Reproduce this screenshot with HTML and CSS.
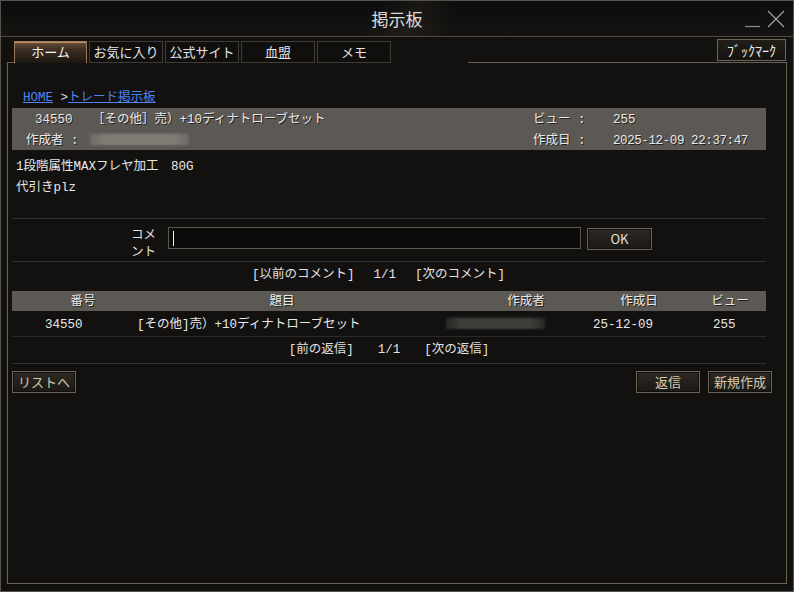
FILE: index.html
```html
<!DOCTYPE html>
<html lang="ja">
<head>
  <meta charset="UTF-8">
  <title>掲示板</title>
  <link rel="stylesheet" href="styles.css">
</head>
<body>

<div class="window">

  <div class="title-bar">
    <div></div>
    <div class="title">掲示板</div>
    <div class="window-controls">
      <svg width="16" height="18" viewBox="0 0 16 18"><line x1="0" y1="16.5" x2="15" y2="16.5" stroke="#8e8e8e" stroke-width="1.2"/></svg>
      <svg width="18" height="18" viewBox="0 0 18 18"><path d="M1 1 L17 17 M17 1 L1 17" stroke="#9c9c9c" stroke-width="1.3" fill="none"/></svg>
    </div>
  </div>

  <div class="tab-bar">
    <div class="tab-edge"></div>
    <div class="tab active">ホーム</div>
    <div class="tab">お気に入り</div>
    <div class="tab">公式サイト</div>
    <div class="tab">血盟</div>
    <div class="tab">メモ</div>
    <div class="tab-gap"></div>
    <div class="tab-rest">
      <button class="bookmark">ﾌﾞｯｸﾏｰｸ</button>
    </div>
  </div>

  <div class="panel">

    <div class="breadcrumb"><a href="#">HOME</a> &gt;<a href="#">トレード掲示板</a></div>

    <div class="post-head">
      <div class="head-row first">
        <span class="post-no">34550</span>
        <span class="post-title">［その他］売）+10ディナトローブセット</span>
        <span class="head-label">ビュー :</span>
        <span>255</span>
      </div>
      <div class="head-row second">
        <span class="author-label">作成者 :</span>
        <span class="author-cell"><span class="blurred"></span></span>
        <span class="head-label">作成日 :</span>
        <span class="num">2025-12-09 22:37:47</span>
      </div>
    </div>

    <div class="post-body">
      <div>1段階属性MAXフレヤ加工　80G</div>
      <div>代引きplz</div>
    </div>

    <div class="comment-row">
      <div class="comment-label">コメント</div>
      <div class="comment-input"><span class="caret"></span></div>
      <button class="btn ok-button">OK</button>
    </div>

    <div class="pager comment-pager">
      <span>[以前のコメント]</span>
      <span>1/1</span>
      <span>[次のコメント]</span>
    </div>

    <div class="list-head">
      <span class="th-no">番号</span>
      <span class="th-title">題目</span>
      <span class="th-author">作成者</span>
      <span class="th-date">作成日</span>
      <span class="th-view">ビュー</span>
    </div>

    <div class="list-row">
      <span class="td-no">34550</span>
      <span class="td-title">[その他]売）+10ディナトローブセット</span>
      <span class="td-author"><span class="blurred dark"></span></span>
      <span class="td-date">25-12-09</span>
      <span>255</span>
    </div>

    <div class="pager reply-pager">
      <span>[前の返信]</span>
      <span>1/1</span>
      <span>[次の返信]</span>
    </div>

    <div class="actions">
      <button class="btn">リストへ</button>
      <div class="spacer"></div>
      <button class="btn">返信</button>
      <button class="btn">新規作成</button>
    </div>

  </div>
</div>

</body>
</html>
```

FILE: styles.css
```css
body {
  margin: 0;
  background-color: #121110;
}

.window {
  width: 794px;
  height: 592px;
  box-sizing: border-box;
  border: 1px solid #56534e;
  background-color: #121110;
  display: flex;
  flex-direction: column;
  font-family: "Liberation Mono", "Noto Sans CJK JP", monospace;
  font-size: 12.5px;
  color: #e8e8e8;
}

/* title bar */

.title-bar {
  flex: none;
  height: 35px;
  display: grid;
  grid-template-columns: 1fr auto 1fr;
  align-items: center;
  border-bottom: 1px solid #54483b;
  background:
    linear-gradient(115deg, transparent 47%, rgba(90, 75, 60, 0.18) 52%, transparent 57%),
    linear-gradient(180deg, #0c0c0c, #151412);
}

.title {
  font-family: "Noto Sans CJK JP", sans-serif;
  font-size: 17px;
  color: #dcdcdc;
}

.window-controls {
  display: flex;
  justify-content: flex-end;
  align-items: center;
  gap: 6px;
  padding-right: 8px;
}

.window-controls svg {
  display: block;
}

/* tabs */

.tab-bar {
  flex: none;
  height: 26px;
  margin: 0 6px;
  display: flex;
  align-items: flex-end;
}

.tab-edge {
  width: 7px;
  height: 1px;
  background-color: #6a6254;
}

.tab {
  box-sizing: border-box;
  width: 74px;
  height: 22px;
  margin-left: 2px;
  border: 1px solid #3f3c38;
  background-color: #100f0e;
  font-family: "Noto Sans CJK JP", sans-serif;
  font-size: 13px;
  line-height: 20px;
  text-align: center;
  color: #e4e4e4;
}

.tab.active {
  width: 73px;
  margin-left: 0;
  border-color: #a27a58;
  border-bottom: none;
  background: linear-gradient(180deg, #6a503a 0%, #3e2f23 35%, #1a1612 100%);
  box-shadow: inset 0 1px 0 #b8916c;
  color: #f6f6f6;
}

.tab-gap {
  width: 77px;
}

.tab-rest {
  flex: 1;
  box-sizing: border-box;
  height: 26px;
  display: flex;
  justify-content: flex-end;
  align-items: flex-end;
  border-bottom: 1px solid #6a6254;
  border-top-right-radius: 3px;
}

.bookmark {
  box-sizing: border-box;
  width: 69px;
  height: 22px;
  margin: 0 1px 1px 0;
  padding: 0;
  border: 1px solid #6f6858;
  background: linear-gradient(180deg, #221f1a, #15130f);
  font-family: "Noto Sans CJK JP", sans-serif;
  font-size: 14px;
  line-height: 20px;
  color: #ececec;
}

/* content panel */

.panel {
  flex: 1;
  margin: 0 6px 7px;
  border: 1px solid #6a6254;
  border-top: none;
  padding: 22px 20px 0 4px;
}

.breadcrumb {
  height: 23px;
  line-height: 27px;
  padding-left: 11px;
  color: #dddddd;
}

.breadcrumb a {
  color: #4d86f2;
  text-decoration: underline;
}

.post-head {
  height: 42px;
  background-color: #5c5954;
  text-shadow: 1px 1px 0 #24221f;
}

.head-row {
  height: 21px;
  line-height: 25px;
  display: flex;
  align-items: flex-start;
  white-space: nowrap;
}

.head-row.first {
  padding-left: 23px;
}

.head-row.second {
  padding-left: 14px;
}

.post-no {
  width: 57px;
}

.post-title {
  width: 441px;
}

.author-label {
  width: 64px;
}

.author-cell {
  width: 443px;
  height: 21px;
  display: flex;
  align-items: center;
}

.head-label {
  width: 80px;
}

.num {
  letter-spacing: -0.4px;
}

.blurred {
  display: inline-block;
  width: 99px;
  height: 11px;
  background:
    linear-gradient(90deg, rgba(92, 89, 84, 0.5), transparent 15%, transparent 85%, rgba(92, 89, 84, 0.5)),
    repeating-linear-gradient(180deg, #9a968f 0, #8a8680 1px, #6c6964 2px, #77736e 3px);
  filter: blur(0.8px);
}

.blurred.dark {
  background:
    linear-gradient(90deg, rgba(18, 17, 16, 0.5), transparent 15%, transparent 85%, rgba(18, 17, 16, 0.5)),
    repeating-linear-gradient(180deg, #5a5854 0, #4a4845 1px, #2c2a28 2px, #3a3835 3px);
}

.post-body {
  box-sizing: border-box;
  height: 69px;
  padding: 7px 4px 0;
  line-height: 21px;
  border-bottom: 1px solid #33312e;
}

/* comment form */

.comment-row {
  box-sizing: border-box;
  height: 43px;
  padding: 6px 0 0 119px;
  display: flex;
  align-items: flex-start;
  border-bottom: 1px solid #33312e;
}

.comment-label {
  width: 26px;
  margin-right: 11px;
  font-family: "Noto Sans CJK JP", sans-serif;
  font-size: 12.5px;
  line-height: 17px;
  color: #e0e0e0;
}

.comment-input {
  box-sizing: border-box;
  width: 413px;
  height: 22px;
  margin-top: 2px;
  padding-left: 4px;
  display: flex;
  align-items: center;
  border: 1px solid #5b5853;
  background-color: #0d0c0b;
}

.caret {
  width: 1px;
  height: 15px;
  background-color: #f0f0f0;
}

.btn {
  box-sizing: border-box;
  width: 64px;
  height: 22px;
  padding: 0;
  border: 1px solid #6b6457;
  background: linear-gradient(180deg, #2d2923, #1b1915);
  box-shadow: inset 0 0 0 1px #0f0e0c;
  font-family: "Noto Sans CJK JP", sans-serif;
  font-size: 13px;
  line-height: 20px;
  color: #d6c9ad;
}

.ok-button {
  width: 65px;
  margin: 3px 0 0 6px;
  color: #e2e0dc;
}

.pager {
  display: flex;
  justify-content: center;
  white-space: nowrap;
  color: #e2e2e2;
}

.comment-pager {
  height: 22px;
  line-height: 26px;
  gap: 19px;
  padding-right: 21px;
  margin-bottom: 7px;
}

/* reply list */

.list-head {
  height: 20px;
  line-height: 23px;
  display: flex;
  align-items: flex-start;
  background-color: #5c5954;
  text-shadow: 1px 1px 0 #24221f;
}

.list-head span {
  text-align: center;
}

.th-no {
  width: 142px;
}

.th-title {
  width: 256px;
}

.th-author {
  width: 116px;
  margin-left: 58px;
}

.th-date {
  width: 110px;
}

.th-view {
  flex: 1;
}

.list-row {
  box-sizing: border-box;
  height: 26px;
  line-height: 28px;
  display: flex;
  align-items: flex-start;
  white-space: nowrap;
  border-bottom: 1px solid #2c2a27;
}

.td-no {
  box-sizing: border-box;
  width: 125px;
  padding-left: 33px;
}

.td-title {
  width: 309px;
}

.td-author {
  width: 147px;
  height: 24px;
  display: flex;
  align-items: center;
}

.td-date {
  width: 120px;
}

.reply-pager {
  box-sizing: border-box;
  height: 27px;
  line-height: 26px;
  gap: 24px;
  border-bottom: 1px solid #33312e;
}

.actions {
  display: flex;
  gap: 8px;
  padding-top: 7px;
  margin-right: -6px;
}

.spacer {
  flex: 1;
}
```
